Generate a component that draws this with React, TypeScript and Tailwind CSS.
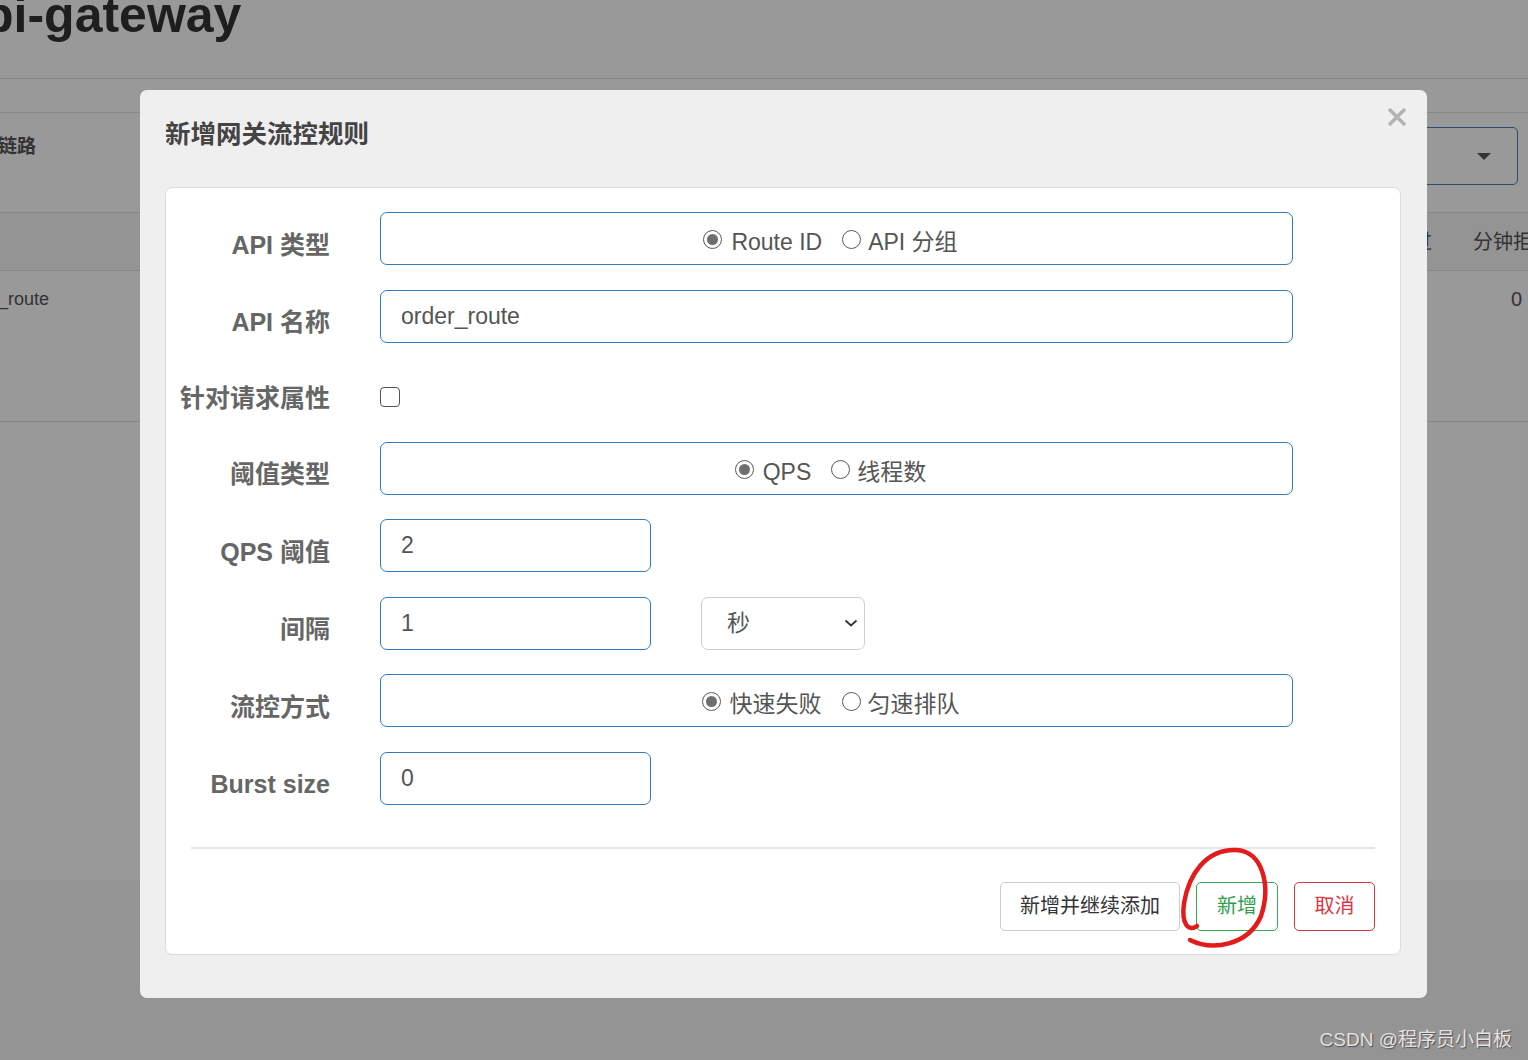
import React from "react";

function Radio({ checked }: { checked?: boolean }) {
  return (
    <span className="inline-flex h-[19px] w-[19px] shrink-0 items-center justify-center rounded-full border-[1.5px] border-[#5a5a5a] bg-white">
      {checked && <span className="h-[11px] w-[11px] rounded-full bg-[#6e6e6e]" />}
    </span>
  );
}

function RadioGroup({ a, b }: { a: string; b: string }) {
  return (
    <div className="flex h-[53px] w-[913px] items-center justify-center rounded-[7px] border border-[#3579bb] bg-white pr-[12px] pt-[8px] text-[23px] text-[#555]">
      <span className="-mt-[6px] flex"><Radio checked /></span>
      <span className="ml-[9px]">{a}</span>
      <span className="-mt-[6px] ml-[20px] flex"><Radio /></span>
      <span className="ml-[7px]">{b}</span>
    </div>
  );
}

function Row({ label, children, h = "h-[53px]" }: { label: string; children: React.ReactNode; h?: string }) {
  return (
    <div className={`flex items-center ${h}`}>
      <div className="w-[164px] shrink-0 pt-[12px] text-right text-[25px] font-bold leading-[28px] text-[#666]">{label}</div>
      <div className="ml-[50px] flex items-center">{children}</div>
    </div>
  );
}

function TextBox({ value, w }: { value: string; w: string }) {
  return (
    <div className={`flex h-[53px] ${w} items-center rounded-[7px] border border-[#3579bb] bg-white pl-[20px] text-[23px] text-[#555]`}>
      {value}
    </div>
  );
}

export default function App() {
  return (
    <div className="relative h-[1060px] w-[1528px] overflow-hidden bg-white font-['Liberation_Sans','Noto_Sans_CJK_SC',sans-serif]">
      {/* background page */}
      <div className="flex h-full flex-col">
        <div className="h-[79px] border-b border-[#e0e0e0]">
          <h1 className="-ml-[17px] -mt-[10px] text-[50px] font-bold leading-[50px] text-[#333]">bi-gateway</h1>
        </div>
        <div className="h-[33px]" />
        <div className="border-t border-[#e0e0e0]">
          <div className="flex h-[99px] items-start justify-between">
            <div className="-ml-[2px] mt-[22px] text-[19px] font-bold leading-[24px] text-[#555]">链路</div>
            <div className="mr-[10px] mt-[14px] flex h-[58px] w-[300px] items-center justify-end rounded-[5px] border-[1.5px] border-[#4a80bb] pr-[26px]">
              <span className="h-0 w-0 border-x-[7px] border-t-[7px] border-x-transparent border-t-[#555]" />
            </div>
          </div>
          <div className="flex h-[59px] items-center gap-[41px] whitespace-nowrap border-y border-[#e0e0e0] bg-[#f7f7f7] pl-[1352px] text-[20px] text-[#555]">
            <span>分钟通过</span>
            <span>分钟拒绝</span>
          </div>
          <div className="flex h-[151px] items-start justify-between border-b border-[#e0e0e0] pt-[16px] text-[18px] leading-[24px] text-[#555]">
            <span className="-ml-[44px]">order_route</span>
            <span className="mr-[6px] text-[20px]">0</span>
          </div>
        </div>
        <div className="h-[458px]" />
        <div className="flex-1 bg-[#f7f7f7]" />
      </div>

      {/* overlay */}
      <div className="absolute inset-0 bg-black/40" />

      {/* modal */}
      <div className="absolute left-[140px] top-[90px] h-[908px] w-[1287px] rounded-[7px] bg-[#efefef] px-[25px]">
        <div className="relative h-[97px] pt-[30px]">
          <div className="text-[25.5px] font-bold leading-[28px] text-[#444]">新增网关流控规则</div>
          <svg className="absolute right-[-4px] top-[18px]" width="18" height="18" viewBox="0 0 18 18">
            <path d="M1 1 L17 17 M17 1 L1 17" stroke="#b3b3b3" strokeWidth="3.5" />
          </svg>
        </div>
        <div className="h-[768px] w-[1236px] rounded-[7px] border border-[#dcdcdc] bg-white pt-[24px]">
          <div className="flex flex-col gap-[24.5px]">
            <Row label="API 类型">
              <RadioGroup a="Route ID" b="API 分组" />
            </Row>
            <Row label="API 名称">
              <TextBox value="order_route" w="w-[913px]" />
            </Row>
            <Row label="针对请求属性" h="h-[50px]">
              <span className="mt-[10px] block h-[20px] w-[20px] rounded-[4px] border-[1.5px] border-[#555] bg-white" />
            </Row>
            <Row label="阈值类型">
              <RadioGroup a="QPS" b="线程数" />
            </Row>
            <Row label="QPS 阈值">
              <TextBox value="2" w="w-[271px]" />
            </Row>
            <Row label="间隔">
              <TextBox value="1" w="w-[271px]" />
              <div className="ml-[50px] flex h-[53px] w-[164px] items-center justify-between rounded-[7px] border border-[#cfcfcf] bg-white pl-[25px] pr-[6px] text-[23px] text-[#555]">
                <span>秒</span>
                <svg width="14" height="8" viewBox="0 0 14 8">
                  <path d="M1.5 1.5 L7 6.5 L12.5 1.5" fill="none" stroke="#333" strokeWidth="1.8" />
                </svg>
              </div>
            </Row>
            <Row label="流控方式">
              <RadioGroup a="快速失败" b="匀速排队" />
            </Row>
            <Row label="Burst size">
              <TextBox value="0" w="w-[271px]" />
            </Row>
          </div>
          <div className="mx-[25px] mt-[42px] h-[2px] bg-[#e6e6e6]" />
          <div className="mr-[25px] mt-[33px] flex justify-end gap-[16px] text-[20px]">
            <button className="h-[49px] w-[180px] rounded-[5px] border border-[#cccccc] bg-white text-[#333]">新增并继续添加</button>
            <button className="h-[49px] w-[82px] rounded-[5px] border border-[#3aa757] bg-white text-[#2ea04a]">新增</button>
            <button className="h-[49px] w-[81px] rounded-[5px] border border-[#dc3545] bg-white text-[#dc3545]">取消</button>
          </div>
        </div>
      </div>

      {/* red hand-drawn annotation */}
      <svg className="pointer-events-none absolute left-0 top-0" width="1528" height="1060">
        <path
          d="M1190 940 C1212 951 1248 946 1261 916 C1271 886 1263 851 1236 850 C1206 849 1189 874 1184 903 C1181 925 1189 932 1197 926"
          fill="none"
          stroke="#e31b1b"
          strokeWidth="4.5"
          strokeLinecap="round"
        />
      </svg>

      {/* watermark */}
      <div className="absolute right-[16px] top-[1028px] text-[19px] leading-[24px] text-[#e2e2e2] [text-shadow:1px_1px_1px_rgba(0,0,0,0.45)]">
        CSDN @程序员小白板
      </div>
    </div>
  );
}
